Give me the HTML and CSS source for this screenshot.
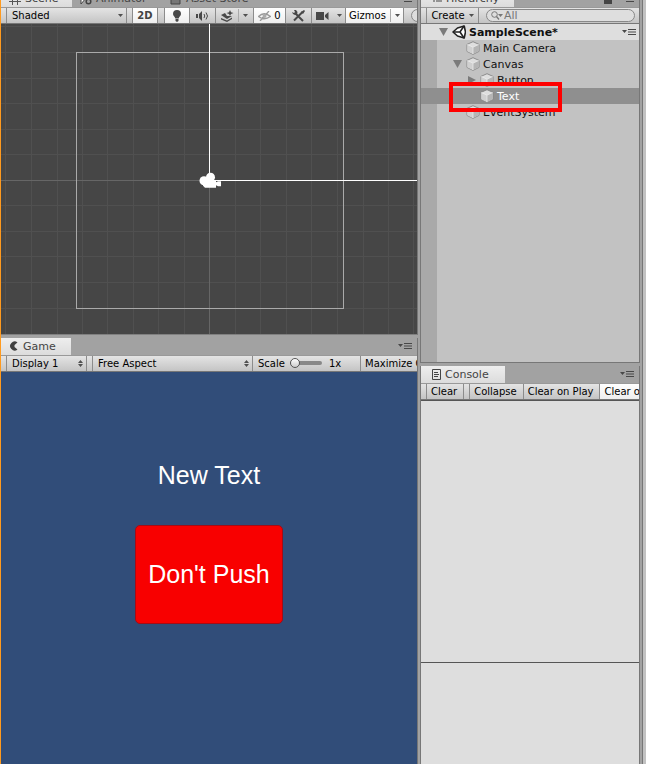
FILE: index.html
```html
<!DOCTYPE html>
<html lang="en">
<head>
  <meta charset="UTF-8">
  <title>SampleScene</title>
  <meta name="viewport" content="width=device-width, initial-scale=1">
  <link rel="stylesheet" href="styles.css">
</head>
<body>

<!-- Shared icons -->
<svg class="sprite" aria-hidden="true">
  <symbol id="cube" viewBox="0 0 14 14">
    <path d="M7 .7 13 3.4v7L7 13.4 1 10.4v-7z" fill="#dedede" stroke="#858585" stroke-width=".9"/>
    <path d="M7 6.2 12.7 3.6v6.6L7 13z" fill="#b5b5b5"/>
    <path d="M1.3 3.6 7 6.2V13l-5.7-2.8z" fill="#d0d0d0"/>
    <path d="M1.3 3.5 7 6.2l5.7-2.7M7 6.2V13" fill="none" stroke="#eee" stroke-width=".7"/>
  </symbol>
  <symbol id="menu" viewBox="0 0 14 8">
    <path d="M0 2h5L2.500 5zM6 1h8v1H6zM6 3.500h8v1H6zM6 6h8v1H6z" fill="#484848"/>
  </symbol>
  <symbol id="caret" viewBox="0 0 5 3">
    <path d="M0 0h5L2.500 3z" fill="#505050"/>
  </symbol>
  <symbol id="updown" viewBox="0 0 5 7">
    <path d="M0 3 2.500 0 5 3zM0 4h5L2.500 7z" fill="#505050"/>
  </symbol>
</svg>

<div class="editor">

  <div class="column">
    <!-- SCENE -->
    <section class="panel scene">
      <div class="tabs">
        <button class="tab tab-scene active">
          <svg width="12" height="12" viewBox="0 0 12 12"><path d="M3.500 0v12M8.500 0v12M0 3.500h12M0 8.500h12" stroke="#555" fill="none"/></svg>Scene
        </button>
        <button class="tab tab-animator">
          <svg width="12" height="12" viewBox="0 0 12 12"><path d="M1 1l5 4-5 6z" fill="#fff" stroke="#444"/><circle cx="8.500" cy="8.500" r="2.300" fill="none" stroke="#444" stroke-width="1.500"/></svg>Animator
        </button>
        <button class="tab tab-store">
          <svg width="12" height="12" viewBox="0 0 12 12"><path d="M1 4h9v7H1zM3 4V1h5v3" fill="#777" stroke="#444"/></svg>Asset Store
        </button>
        <button class="panel-menu" aria-label="Scene view menu"><svg width="14" height="8"><use href="#menu"/></svg></button>
      </div>
      <div class="toolbar">
        <label class="popup popup-shaded">
          <select aria-label="Draw mode"><option>Shaded</option></select>
          <svg width="5" height="3"><use href="#caret"/></svg>
        </label>
        <button class="tool tool-2d on">2D</button>
        <button class="tool on" aria-label="Lighting">
          <svg width="10" height="12" viewBox="0 0 10 12"><path d="M5 0a4 4 0 0 1 4 4c0 2-2 2.500-2.300 4.500H3.300C3 6.500 1 6 1 4a4 4 0 0 1 4-4zM3.500 9h3v2L5 12l-1.500-1z" fill="#484848"/></svg>
        </button>
        <button class="tool" aria-label="Audio">
          <svg width="13" height="10" viewBox="0 0 13 10"><path d="M0 3h2v4H0zM3 3l3-3v10L3 7z" fill="#484848"/><path d="M8 3q1.500 2 0 4M10 1.500q3 3.500 0 7" fill="none" stroke="#484848"/></svg>
        </button>
        <button class="tool tool-split effects" aria-label="Effects">
          <svg width="13" height="12" viewBox="0 0 13 12"><path d="M0 5l4-2 2 3h5L6 9zM0 8l6 2.500 5-3V9l-5 3-6-2.500z" fill="#484848"/><path d="M9 0l1 2.200L12.500 3 10 4 9 6 8 4 5.500 3 8 2.200z" fill="#484848"/></svg>
          <span class="divider"></span>
          <svg width="5" height="3"><use href="#caret"/></svg>
        </button>
        <button class="tool hidden-count on" aria-label="Hidden objects">
          <svg width="13" height="10" viewBox="0 0 13 10"><path d="M.5 5.500Q6 0 12.500 5.500 6 10 .5 5.500zM2 10 11 0" fill="none" stroke="#999" stroke-width="1.300"/><circle cx="6.500" cy="5" r="2" fill="#aaa"/></svg>0
        </button>
        <button class="tool" aria-label="Tools">
          <svg width="13" height="12" viewBox="0 0 13 12"><path d="M3 3l8 8M10.500 2 2 10.500" stroke="#484848" stroke-width="2" fill="none"/><path d="M0 2l2 1 1-1-1-2h2l1.500 2L5 4.500 3 5 1 4zM9 2l3-2 1 1-2 3z" fill="#484848"/></svg>
        </button>
        <button class="tool camera-menu" aria-label="Camera settings">
          <svg width="13" height="8" viewBox="0 0 13 8"><path d="M0 0h8v8H0zM9 3l3.500-3v8L9 5z" fill="#484848"/></svg>
          <svg width="5" height="3"><use href="#caret"/></svg>
        </button>
        <button class="tool tool-split gizmos on">Gizmos
          <span class="divider"></span>
          <svg width="5" height="3"><use href="#caret"/></svg>
        </button>
        <input class="search scene-search" type="search" aria-label="Search scene">
      </div>
      <svg class="viewport" viewBox="0 0 416 309" preserveAspectRatio="xMidYMid slice" shape-rendering="crispEdges" role="img" aria-label="Scene view">
        <path d="M4.500 0v310M30.500 0v310M56.500 0v310M81.500 0v310M106.500 0v310M132.500 0v310M157.500 0v310M183.500 0v310M234.500 0v310M259.500 0v310M285.500 0v310M310.500 0v310M336.500 0v310M362.500 0v310M387.500 0v310M412.500 0v310M0 2.500h416M0 28.500h416M0 54.500h416M0 79.500h416M0 105.500h416M0 130.500h416M0 181.500h416M0 207.500h416M0 232.500h416M0 258.500h416M0 283.500h416" stroke="#505050" fill="none"/>
        <path d="M208.500 0v310M0 156.500h416" stroke="#666" fill="none"/>
        <path d="M75.500 28.500h267v255h-267z" stroke="#aaa" fill="none"/>
        <path d="M208.500 0v156.500H416" stroke="#fff" fill="none"/>
        <g fill="#fff" shape-rendering="auto">
          <circle cx="203" cy="156.500" r="4.500"/>
          <circle cx="209.500" cy="153" r="4.500"/>
          <path d="M202 156h13v2l2-1h3v5h-3l-2-1v2.500h-11l-2-2z"/>
        </g>
      </svg>
    </section>

    <!-- GAME -->
    <section class="panel game">
      <div class="tabs">
        <button class="tab tab-game active">
          <svg width="10" height="10" viewBox="0 0 10 10"><path d="M8.500 1.500A4.500 4.500 0 1 0 8.500 8.500L5.500 6V4z" fill="#404040"/></svg>Game
        </button>
        <button class="panel-menu" aria-label="Game menu"><svg width="14" height="8"><use href="#menu"/></svg></button>
      </div>
      <div class="toolbar">
        <label class="popup popup-display">
          <select aria-label="Display"><option>Display 1</option></select>
          <svg width="5" height="7"><use href="#updown"/></svg>
        </label>
        <label class="popup popup-aspect">
          <select aria-label="Aspect"><option>Free Aspect</option></select>
          <svg width="5" height="7"><use href="#updown"/></svg>
        </label>
        <div class="scale">
          <label for="scale">Scale</label>
          <input id="scale" type="range" min="1" max="5" value="1">
          <output for="scale">1x</output>
        </div>
        <button class="tool text-tool">Maximize On Play</button>
      </div>
      <div class="game-view">
        <p class="new-text">New Text</p>
        <button class="push">Don't Push</button>
      </div>
    </section>
  </div>

  <div class="column">
    <!-- HIERARCHY -->
    <section class="panel hierarchy">
      <div class="tabs">
        <button class="tab tab-hierarchy active">
          <svg width="9" height="9" viewBox="0 0 9 9"><path d="M0 1h2M3 1h6M0 4h2M3 4h6M0 7h2M3 7h6" stroke="#444"/></svg>Hierarchy
        </button>
        <button class="panel-menu" aria-label="Hierarchy menu">
          <svg width="8" height="10" viewBox="0 0 8 10"><path d="M0 4h8v6H0zM2 4V1h4v3" fill="#444" stroke="#444"/></svg>
          <svg width="14" height="8"><use href="#menu"/></svg>
        </button>
      </div>
      <div class="toolbar">
        <button class="tool create">Create <svg width="5" height="3"><use href="#caret"/></svg></button>
        <label class="search">
          <svg width="12" height="9" viewBox="0 0 12 9"><circle cx="3.500" cy="3.500" r="2.800" fill="none" stroke="#777"/><path d="M5.500 5.500 8 8.500" stroke="#777" stroke-width="1.300"/><path d="M7 3h5L9.500 6z" fill="#777"/></svg>
          <input type="search" placeholder="All" aria-label="Search hierarchy">
        </label>
      </div>
      <ul class="tree">
        <li class="row root">
          <svg class="arrow" width="9" height="8" viewBox="0 0 9 8"><path d="M0 0h9L4.500 8z" fill="#7b7b7b"/></svg>
          <svg width="14" height="14" viewBox="0 0 14 14"><path d="M12.200 1 13.500 7l-1.300 6L5.500 11 1 7l4.500-4z" fill="#fff" stroke="#222" stroke-width="1.600" stroke-linejoin="round"/><path d="M1 7h7L12 1M8 7l4 6" fill="none" stroke="#222" stroke-width="1.600"/></svg>
          <span>SampleScene*</span>
          <button class="panel-menu" aria-label="Scene menu"><svg width="14" height="8"><use href="#menu"/></svg></button>
        </li>
        <li class="row level-1"><span class="arrow"></span><svg width="14" height="14"><use href="#cube"/></svg><span>Main Camera</span></li>
        <li class="row level-1">
          <svg class="arrow" width="9" height="8" viewBox="0 0 9 8"><path d="M0 0h9L4.500 8z" fill="#7b7b7b"/></svg>
          <svg width="14" height="14"><use href="#cube"/></svg><span>Canvas</span>
        </li>
        <li class="row level-2">
          <svg class="arrow" width="9" height="8" viewBox="0 0 9 8"><path d="M1 0v8l8-4z" fill="#7b7b7b"/></svg>
          <svg width="14" height="14"><use href="#cube"/></svg><span>Button</span>
        </li>
        <li class="row level-2 selected"><span class="arrow"></span><svg width="14" height="14"><use href="#cube"/></svg><span>Text</span><span class="marker"></span></li>
        <li class="row level-1"><span class="arrow"></span><svg width="14" height="14"><use href="#cube"/></svg><span>EventSystem</span></li>
      </ul>
    </section>

    <!-- CONSOLE -->
    <section class="panel console">
      <div class="tabs">
        <button class="tab tab-console active">
          <svg width="9" height="11" viewBox="0 0 9 11"><path d="M.5.5h8v10h-8zM2 3.500h4M2 5.500h5M2 7.500h4" fill="none" stroke="#444"/></svg>Console
        </button>
        <button class="panel-menu" aria-label="Console menu"><svg width="14" height="8"><use href="#menu"/></svg></button>
      </div>
      <div class="toolbar">
        <button class="tool text-tool clear">Clear</button>
        <button class="tool text-tool">Collapse</button>
        <button class="tool text-tool">Clear on Play</button>
        <button class="tool text-tool on">Clear on Build</button>
      </div>
      <div class="log"></div>
      <div class="detail"></div>
    </section>
  </div>

  <div class="next-dock"></div>
</div>

</body>
</html>
```

FILE: styles.css
```css
* {
  box-sizing: border-box;
}

body {
  margin: 0;
  background-color: #a2a2a2;
  font-family: "DejaVu Sans", Verdana, sans-serif;
  font-size: 11px;
  color: #111;
  overflow: hidden;
}

button, input, select {
  margin: 0;
  padding: 0;
  border: 0;
  border-radius: 0;
  background: none;
  font: inherit;
  color: inherit;
}

svg {
  display: block;
  flex: none;
}

.sprite {
  display: none;
}

/* The top row of tabs is scrolled partly out of the window */
.editor {
  display: grid;
  grid-template-columns: minmax(0, 417fr) minmax(0, 220fr) 4px;
  column-gap: 2px;
  height: calc(100vh + 10px);
  margin-top: -10px;
  border-left: 1px solid #ff9a1e;
}

.column {
  display: flex;
  flex-direction: column;
  gap: 3px;
  min-height: 0;
}

.panel {
  display: flex;
  flex-direction: column;
  min-height: 0;
  border-right: 1px solid #777;
}

.hierarchy, .console {
  border-left: 1px solid #777;
}

.scene {
  flex: 344 1 0;
  border-bottom: 1px solid #808080;
}

.game {
  flex: 427 1 0;
}

.hierarchy {
  flex: 372 1 0;
  border-bottom: 1px solid #777;
}

.console {
  flex: 399 1 0;
}

.next-dock {
  border-left: 1px solid #777;
  background-color: #c2c2c2;
}

/* Tabs */
.tabs {
  display: flex;
  align-items: stretch;
  height: 17px;
  flex: none;
}

.tab {
  display: flex;
  align-items: center;
  gap: 4px;
  padding: 0 8px;
  color: #444;
  white-space: nowrap;
}

.tab.active {
  background: linear-gradient(#eee, #dcdcdc);
}

.tab-scene {
  width: 71px;
}

.tab-animator {
  width: 90px;
}

.tab-game {
  width: 70px;
}

.tab-hierarchy {
  width: 93px;
  padding: 0 12px;
}

.tab-console {
  width: 84px;
  padding: 0 11px;
}

.panel-menu {
  display: flex;
  align-items: center;
  gap: 8px;
  margin-left: auto;
  padding-right: 5px;
}

/* Toolbars */
.toolbar {
  display: flex;
  height: 17px;
  flex: none;
  padding-left: 5px;
  border-top: 1px solid #999;
  border-bottom: 1px solid #777;
  background: linear-gradient(#e4e4e4, #c4c4c4);
  font-size: 10px;
  color: #000;
  overflow: hidden;
}

.tool {
  display: flex;
  align-items: center;
  justify-content: center;
  flex: none;
  width: 26px;
  border-right: 1px solid #8c8c8c;
  white-space: nowrap;
}

.tool.on {
  background: linear-gradient(#fff, #eee);
}

.tool-2d {
  margin: 0 6px 0 5px;
  border-left: 1px solid #8c8c8c;
  color: #444;
  font-weight: bold;
}

.tool-2d + .tool {
  border-left: 1px solid #8c8c8c;
}

.tool-split {
  gap: 4px;
}

.divider {
  width: 1px;
  height: 13px;
  background-color: #aaa;
}

.effects {
  width: 38px;
}

.hidden-count {
  width: 32px;
  gap: 3px;
}

.camera-menu {
  width: 34px;
  gap: 8px;
}

.gizmos {
  width: 58px;
}

.text-tool {
  width: auto;
  padding: 0 6px 0 4px;
}

.clear {
  margin-right: 5px;
  border-left: 1px solid #8c8c8c;
}

.clear + .tool {
  border-left: 1px solid #8c8c8c;
}

.create {
  width: 53px;
  gap: 4px;
  border-left: 1px solid #8c8c8c;
}

.popup {
  display: flex;
  align-items: center;
  flex: none;
  padding: 0 3px 0 5px;
  border: solid #8c8c8c;
  border-width: 0 1px;
}

.popup select {
  flex: 1;
  min-width: 0;
  appearance: none;
  outline: 0;
}

.popup-shaded {
  width: 121px;
}

.popup-display {
  width: 81px;
}

.popup-aspect {
  width: 161px;
  margin-left: 5px;
}

.search {
  display: flex;
  align-items: center;
  gap: 1px;
  flex: 1;
  min-width: 0;
  margin: 1px 4px 1px 7px;
  padding-left: 4px;
  border: 1px solid #888;
  border-radius: 8px;
  background-color: #dedede;
}

.search input {
  flex: 1;
  min-width: 0;
  outline: 0;
  font-size: 11px;
}

.search input::placeholder {
  color: #777;
}

.scene-search {
  flex: none;
  width: 120px;
}

.scale {
  display: flex;
  align-items: center;
  gap: 5px;
  flex: none;
  width: 108px;
  padding-left: 5px;
  border-right: 1px solid #8c8c8c;
}

.scale input {
  width: 32px;
  height: 11px;
  appearance: none;
}

.scale input::-webkit-slider-runnable-track {
  height: 4px;
  border-radius: 2px;
  background-color: #888;
}

.scale input::-webkit-slider-thumb {
  width: 10px;
  height: 10px;
  margin-top: -3px;
  appearance: none;
  border: 1px solid #555;
  border-radius: 50%;
  background: linear-gradient(#fff, #ccc);
}

.scale output {
  padding-left: 2px;
}

/* Views */
.viewport {
  flex: 1;
  width: 100%;
  min-height: 0;
  background-color: #464646;
}

.game-view {
  display: flex;
  flex: 1;
  flex-direction: column;
  align-items: center;
  gap: 35px;
  padding-top: 88px;
  background-color: #314d79;
  font-family: "Liberation Sans", Arial, sans-serif;
  font-size: 25px;
  line-height: 30px;
  color: #fff;
}

.new-text {
  margin: 0;
}

.push {
  width: 148px;
  height: 99px;
  border: 1px solid #a30c16;
  border-radius: 5px;
  background-color: #f80000;
  cursor: pointer;
}

.push:hover {
  background-color: #e60000;
}

/* Hierarchy tree */
.tree {
  flex: 1;
  margin: 0;
  padding: 0;
  list-style: none;
  background: linear-gradient(90deg, #a9a9a9 16px, #c2c2c2 16px);
}

.row {
  display: flex;
  align-items: center;
  gap: 3px;
  position: relative;
  height: 16px;
}

.arrow {
  flex: none;
  width: 9px;
  margin-right: 1px;
}

.root {
  padding-left: 18px;
  background-color: #dedede;
  font-weight: bold;
}

.root .panel-menu {
  padding-right: 3px;
}

.level-1 {
  padding-left: 32px;
}

.level-2 {
  padding-left: 46px;
}

.selected {
  background-color: #8f8f8f;
  color: #fff;
  z-index: 1;
}

.marker {
  position: absolute;
  top: -6px;
  left: 28px;
  width: 113px;
  height: 30px;
  border: 4px solid #f00;
}

/* Console */
.log {
  flex: 263 1 0;
  border-top: 1px solid #555;
  border-bottom: 1px solid #555;
  background-color: #dedede;
}

.detail {
  flex: 102 1 0;
  background-color: #dedede;
}
```
